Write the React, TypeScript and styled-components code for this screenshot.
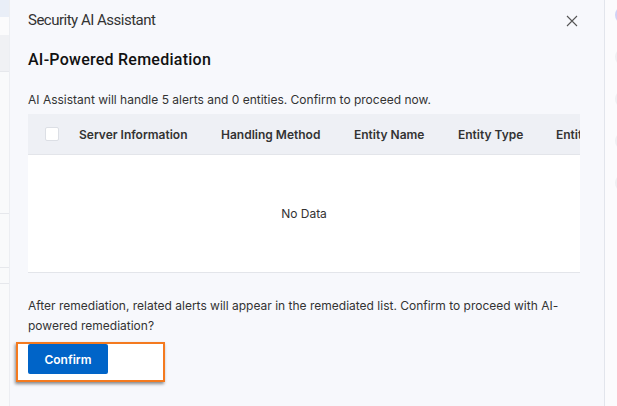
import React from 'react';
import styled, { createGlobalStyle } from 'styled-components';

const GlobalStyle = createGlobalStyle`
  html, body {
    margin: 0;
    padding: 0;
    background: #f7f8fa;
    font-family: Inter, "Liberation Sans", Arial, sans-serif;
    -webkit-font-smoothing: antialiased;
  }
  * {
    box-sizing: border-box;
  }
`;

const columns = [
  { key: 'server', title: 'Server Information', width: 142 },
  { key: 'method', title: 'Handling Method', width: 133 },
  { key: 'name', title: 'Entity Name', width: 104 },
  { key: 'type', title: 'Entity Type', width: 98 },
  { key: 'status', title: 'Entity Status', width: 140 },
];

const railItems = [true, false, false, false, false];

export default function App() {
  return (
    <>
      <GlobalStyle />
      <Page>
        <LeftStrip>
          <StripBlock $tone="#e9eef7" $height={17} />
          <StripBlock $tone="#fbfbfc" $height={18} />
          <StripBlock $tone="#f0f1f4" $height={36} />
          <StripBlock $tone="#f9fafb" $height={142} $line />
          <StripBlock $tone="#f9fafb" $height={54} $line />
          <StripBlock $tone="#f9fafb" $height={16} $line />
          <StripBlock $tone="#f9fafb" $height={87} $line />
        </LeftStrip>

        <Drawer>
          <DrawerHeader>
            <DrawerTitle>Security AI Assistant</DrawerTitle>
            <CloseButton aria-label="close">
              <svg width="12" height="12" viewBox="0 0 12 12" fill="none">
                <path d="M1 1L11 11M11 1L1 11" stroke="#555" strokeWidth="1.1" />
              </svg>
            </CloseButton>
          </DrawerHeader>

          <SectionTitle>AI-Powered Remediation</SectionTitle>
          <InfoText>AI Assistant will handle 5 alerts and 0 entities. Confirm to proceed now.</InfoText>

          <TableWrap>
            <HeaderRow>
              <CheckCell>
                <Checkbox />
              </CheckCell>
              {columns.map((col) => (
                <HeaderCell key={col.key} style={{ width: col.width }}>
                  {col.title}
                </HeaderCell>
              ))}
            </HeaderRow>
            <EmptyBody>No Data</EmptyBody>
          </TableWrap>

          <Notice>
            After remediation, related alerts will appear in the remediated list. Confirm to proceed with AI-powered
            remediation?
          </Notice>

          <Highlight>
            <PrimaryButton type="button">Confirm</PrimaryButton>
          </Highlight>
        </Drawer>

        <Rail>
          {railItems.map((active, i) => (
            <RailDot key={i} $active={active} />
          ))}
        </Rail>
      </Page>
    </>
  );
}

const Page = styled.div`
  display: flex;
  width: 617px;
  height: 406px;
  overflow: hidden;
`;

const LeftStrip = styled.div`
  width: 10px;
  flex-shrink: 0;
  display: flex;
  flex-direction: column;
  background: #f9fafb;
  border-right: 1px solid #eceef2;
`;

const StripBlock = styled.div<{ $tone: string; $height: number; $line?: boolean }>`
  height: ${(p) => p.$height}px;
  background: ${(p) => p.$tone};
  border-top: ${(p) => (p.$line ? '1px solid #e6e8ec' : 'none')};
`;

const Drawer = styled.div`
  width: 595px;
  flex-shrink: 0;
  background: #f7f8fc;
  border-right: 1px solid #e2e5ec;
  padding: 9px 24px 0 18px;
  display: flex;
  flex-direction: column;
  color: #333;
`;

const DrawerHeader = styled.div`
  display: flex;
  align-items: center;
  justify-content: space-between;
  height: 22px;
`;

const DrawerTitle = styled.h2`
  margin: 0;
  font-family: Roboto, "Liberation Sans", Arial, sans-serif;
  font-size: 15px;
  font-weight: 400;
  line-height: 22px;
  letter-spacing: -0.5px;
  color: #333;
`;

const CloseButton = styled.button`
  border: none;
  background: transparent;
  padding: 0;
  margin-right: 2px;
  margin-top: 2px;
  width: 12px;
  height: 12px;
  display: flex;
  cursor: pointer;
`;

const SectionTitle = styled.h3`
  margin: 18px 0 0;
  font-family: Roboto, "Liberation Sans", Arial, sans-serif;
  font-size: 16px;
  font-weight: 500;
  line-height: 22px;
  letter-spacing: 0.25px;
  color: #111;
`;

const InfoText = styled.p`
  margin: 19px 0 0;
  font-size: 12px;
  line-height: 20px;
  color: #333;
`;

const TableWrap = styled.div`
  margin-top: 4px;
  width: 552px;
  overflow: hidden;
  border-bottom: 1px solid #e3e5ea;
`;

const HeaderRow = styled.div`
  display: flex;
  height: 41px;
  background: #eef0f5;
  border-bottom: 1px solid #e3e5ea;
  white-space: nowrap;
`;

const CheckCell = styled.div`
  width: 51px;
  flex-shrink: 0;
  display: flex;
  align-items: center;
  padding-left: 17px;
`;

const Checkbox = styled.span`
  display: block;
  width: 14px;
  height: 14px;
  background: #fff;
  border: 1px solid #dcdfe5;
  border-radius: 2px;
`;

const HeaderCell = styled.div`
  flex-shrink: 0;
  display: flex;
  align-items: center;
  font-size: 12px;
  font-weight: 600;
  color: #333;
`;

const EmptyBody = styled.div`
  height: 117px;
  background: #fff;
  display: flex;
  align-items: center;
  justify-content: center;
  font-size: 12px;
  color: #333;
`;

const Notice = styled.p`
  margin: 23px 0 0;
  font-size: 12px;
  line-height: 20px;
  color: #333;
`;

const Highlight = styled.div`
  margin: 6px 0 0 -12px;
  width: 149px;
  height: 40px;
  border: 2px solid #f47a1f;
  background: #fff;
  box-shadow: -1px 2px 3px rgba(0, 0, 0, 0.45);
  padding-left: 10px;
`;

const PrimaryButton = styled.button`
  display: block;
  width: 80px;
  height: 30px;
  border: none;
  border-radius: 2px;
  background: #0064c8;
  color: #fff;
  font-family: inherit;
  font-size: 12px;
  font-weight: 600;
  cursor: pointer;
`;

const Rail = styled.div`
  flex: 1;
  background: #fbfbfd;
  display: flex;
  flex-direction: column;
  gap: 24px;
  padding: 6px 0 0 10px;
  overflow: hidden;
`;

const RailDot = styled.span<{ $active: boolean }>`
  display: block;
  width: 18px;
  height: 18px;
  flex-shrink: 0;
  border-radius: 50%;
  background: ${(p) => (p.$active ? '#d0d3f6' : '#eff0f3')};
`;
